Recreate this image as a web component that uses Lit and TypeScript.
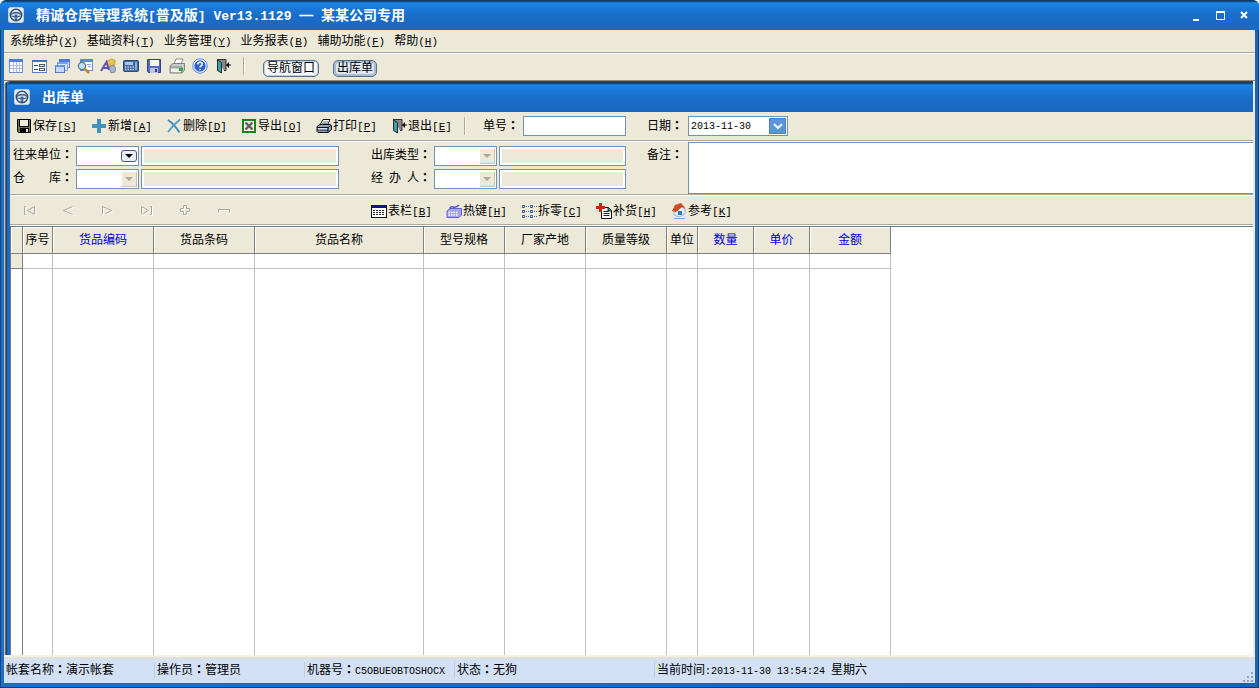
import { LitElement, html, css, svg, TemplateResult } from "lit";
import { customElement, state } from "lit/decorators.js";

/** Splits a caption into CJK text, half-width Latin runs and full-width colons. "_X" marks an access key. */
function t(text: string): unknown[] {
  const runs = text.match(/[\x20-\x7e]+|：|[^\x20-\x7e：]+/g) ?? [];
  return runs.map((run) => {
    if (run === "：") return html`<span class="colon">：</span>`;
    if (!/^[\x20-\x7e]/.test(run)) return run;
    const key = run.match(/^(.)_(.)(.)$/);
    return key
      ? html`<span class="latin access">${key[1]}<u>${key[2]}</u>${key[3]}</span>`
      : html`<span class="latin">${run}</span>`;
  });
}

const draw = (body: TemplateResult | unknown, w = 16, h = 16) =>
  html`<svg width=${w} height=${h} viewBox="0 0 ${w} ${h}" aria-hidden="true">${body}</svg>`;

const icons: Record<string, unknown> = {
  wheel: draw(svg`<rect x=".5" y=".5" width="15" height="15" rx="2" fill="#e8eef6" stroke="#b9cde4"/>
    <circle cx="8" cy="8" r="5.700" fill="none" stroke="#2c5078" stroke-width="1.500"/>
    <path d="M2.800 7.200Q8 4.200 13.200 7.200" fill="none" stroke="#3c6391" stroke-width="1.700"/>
    <path d="M3 9l4 .6L7.500 13M13 9l-4 .6L8.500 13" fill="none" stroke="#3c6391" stroke-width="1.200"/>
    <rect x="6.500" y="7.500" width="3" height="3" rx="1" fill="#3c6391"/>`),
  grid: draw(svg`<rect x="1.500" y="1.500" width="13" height="13" fill="#fff" stroke="#6a8cd6"/>
    <rect x="1" y="1" width="14" height="3" fill="#4f7be0"/>
    <path d="M2 7.500h12M2 10.500h12M5.500 4v10M8.500 4v10M11.500 4v10" stroke="#a9bfe8"/>`),
  form: draw(svg`<rect x="1.500" y="2.500" width="14" height="12" fill="#fff" stroke="#5d82c4"/>
    <rect x="1" y="2" width="15" height="2" fill="#3f6fd0"/>
    <path d="M3 7.500h4M3 11.500h4" stroke="#355"/><rect x="8.500" y="6.500" width="5" height="2" fill="#fff" stroke="#456"/>
    <rect x="8.500" y="10.500" width="5" height="2" fill="#fff" stroke="#456"/>`),
  windows: draw(svg`<rect x="5.500" y="1.500" width="10" height="8" fill="#cfdcf7" stroke="#6687cf"/><rect x="5" y="1" width="11" height="3" fill="#4c78da"/>
    <rect x="3.500" y="4.500" width="10" height="8" fill="#dbe5fa" stroke="#8aa4dc"/><rect x="3" y="4" width="11" height="2" fill="#7d9fe6"/>
    <rect x="1.500" y="7.500" width="9" height="7" fill="#c9d8f6" stroke="#5578c4"/><rect x="1" y="7" width="10" height="2" fill="#6c92e4"/>`),
  search: draw(svg`<rect x="3.500" y="1.500" width="12" height="11" fill="#fff" stroke="#6a8cd6"/><rect x="3" y="1" width="13" height="3" fill="#5b86e4"/>
    <path d="M10 6.500h4M11 8.500h3" stroke="#8ba7de"/><circle cx="5" cy="8" r="3.600" fill="#bfe6ee" stroke="#52748c" stroke-width="1.300"/>
    <path d="M8 11l4 4" stroke="#c58a28" stroke-width="2.500"/>`),
  design: draw(svg`<path d="M7 3l4-2 4 1v5l-4 2-4-2Z" fill="#e8c24a" stroke="#a8842a" stroke-width=".6"/><path d="M9 9l4-2 3 3-1 4-4 1Z" fill="#a8b5cf" stroke="#66748f" stroke-width=".7"/>
    <path d="M1 13L6.500 4 9 12M3 10h5" fill="none" stroke="#6753b8" stroke-width="2"/>`),
  calc: draw(svg`<rect x=".5" y="2.500" width="15" height="11" rx="1" fill="#42679b" stroke="#294c80"/><rect x="2" y="4" width="8" height="3" fill="#a9c6e6"/>
    <path d="M2 9h9M2 11.500h9" stroke="#b9cce4" stroke-width="1.500" stroke-dasharray="1.500 1"/><rect x="12" y="4" width="2" height="8" fill="#8daad0"/>`),
  disk: draw(svg`<path d="M1.500 1.500h13v13h-12l-1-1Z" fill="#5a66c4" stroke="#333d98"/><rect x="4" y="2" width="9" height="6" fill="#f4f6ff"/>
    <rect x="4" y="10" width="8" height="5" fill="#bcc4e6"/><rect x="9" y="11" width="2" height="3" fill="#303a86"/>`),
  printer: draw(svg`<path d="M5 6l2-5h7l-2 5Z" fill="#fff" stroke="#777" stroke-width=".8"/><path d="M1 8l3-2.500h11.500V12L13 15H1Z" fill="#c9ccca" stroke="#6a6d6b" stroke-width=".8"/>
    <path d="M1 9h12v6" fill="none" stroke="#80837f"/><path d="M2 11h10v3H2z" fill="#f2f2f2"/><rect x="10" y="10" width="4" height="3" fill="#3aa648"/>`),
  help: draw(svg`<circle cx="8" cy="8" r="7.200" fill="#fff" stroke="#5883d8"/><circle cx="8" cy="8" r="5.700" fill="#2e62cf"/>
    <path d="M5.800 6.400Q5.800 4.300 8 4.300T10.200 6.200Q10.200 7.400 8.900 8 8 8.400 8 9.600M8 10.900v1.300" stroke="#fff" stroke-width="1.500" fill="none"/>`),
  exit: draw(svg`<path d="M2 1.500h9v11H9" fill="#8a8a8a" stroke="#333"/><path d="M2.500 2L6.500 4.500V15L2.500 12.500Z" fill="#4a9aa6" stroke="#12343a"/>
    <path d="M11 7h5M13.500 4.500v5" stroke="#111" stroke-width="1"/><path d="M11 7l2.500-2.500v5Z" fill="#111"/>`),
  save: draw(svg`<path d="M1.500 1.500h13v13h-12l-1-1Z" fill="#77752c" stroke="#000"/><rect x="4" y="2" width="8" height="6" fill="#efecd9"/><path d="M3.500 2v6.500h9V2" fill="none" stroke="#000"/>
    <rect x="4" y="10" width="9" height="5" fill="#000"/><rect x="10" y="11" width="2" height="3" fill="#efecd9"/>`),
  add: draw(svg`<path d="M6 1h4v5h5v4h-5v5H6v-5H1V6h5Z" fill="#3d93bd"/>`),
  remove: draw(svg`<path d="M2 2Q8 6 13.500 14.500" stroke="#3a8dc0" stroke-width="2" fill="none"/><path d="M14 1.500Q7 7 2 14" stroke="#4c9bc9" stroke-width="1.700" fill="none"/>`),
  excel: draw(svg`<rect x="2" y="2" width="12" height="12" fill="#fff" stroke="#168417" stroke-width="2"/><path d="M4 4h8v8H4z" fill="#dcdcdc"/>
    <path d="M4.500 4.500l7 7M11.500 4.500l-7 7" stroke="#555b57" stroke-width="2"/>`),
  print: draw(svg`<path d="M4 7l3-5.500h7L11.500 7Z" fill="#fff" stroke="#111"/><path d="M7 4h5M6 5.700h5" stroke="#333" stroke-width=".7"/><path d="M1 8.500L4 6.500h10.500l1 1v4L12 14.500H2l-1-1Z" fill="#8ea2c2" stroke="#111"/>
    <path d="M1 9.500h11l3-2M12 9.500v5M1 12h11" stroke="#111" fill="none"/><rect x="2" y="10" width="9" height="1.500" fill="#dbe2ee"/>`),
  columns: draw(svg`<rect x=".5" y="2.500" width="15" height="12" fill="#fff" stroke="#111"/><rect x="1" y="2" width="14" height="3" fill="#11118e"/>
    <path d="M2 7.500h12M2 9.500h12M2 11.500h12" stroke="#222" stroke-dasharray="2 1"/>`),
  hotkey: draw(svg`<path d="M4 6Q4 3 7 4T13 2" fill="none" stroke="#5a54d2" stroke-width="1.500"/><path d="M1 8l3-2.500h11.500V12L13 14.500H1Z" fill="#a6a4ec" stroke="#6360d0"/>
    <path d="M2.500 9.500h10M2.500 12h10" stroke="#fff" stroke-width="1.300" stroke-dasharray="1.500 1"/>`),
  split: draw(svg`<g fill="none" stroke="#4a69a4"><rect x="1.500" y="2.500" width="2" height="2"/><rect x="1.500" y="7.500" width="2" height="2"/><rect x="1.500" y="12.500" width="2" height="2"/>
    <rect x="9.500" y="2.500" width="2" height="2"/><rect x="9.500" y="7.500" width="2" height="2"/><rect x="9.500" y="12.500" width="2" height="2"/>
    <path d="M5 3.500h3M5 8.500h3M5 13.500h3M13 3.500h3M13 8.500h3M13 13.500h3" stroke-dasharray="1 1"/></g>`),
  refill: draw(svg`<path d="M5.500 4.500h7l3 3v8h-10Z" fill="#fff" stroke="#111"/><path d="M12 4.500V8h3.500" fill="#19a0a8" stroke="#111"/><path d="M7.500 8.500h5M7.500 10.500h6M7.500 12.500h6" stroke="#222"/>
    <path d="M3 0h3v3h3v3H6v3H3V6H0V3h3Z" fill="#bd2d12"/>`),
  home: draw(svg`<path d="M3 7v5l5 2 6-3V6L9 3Z" fill="#e7effb" stroke="#7d9bc6" stroke-width=".7"/><path d="M1 8L4 2l6-2 5 6-4-2-6 5Z" fill="#cc4a24"/>
    <rect x="7" y="8" width="4" height="4" fill="#2d7ac6"/><path d="M3 15.500h11" stroke="#79a7dd"/>`),
};

const navGlyphs: [string, string][] = [
  ["首条", "M4 2.500H2.500v8H4M12.500 2.500L5.500 6.500l7 4Z"],
  ["上一条", "M11.500 2.500L2.500 6.500l9 4"],
  ["下一条", "M2.500 10.500v-8l9 4-6 3"],
  ["末条", "M2.500 10.500v-8l7 4-6 3.500M11 2.500h1.500v8H11"],
  ["插入", "M5.500 1.500h3v3h3v3h-3v3h-3v-3h-3v-3h3Z"],
  ["移除", "M1.500 8.500v-3h11v3"],
];

const gridColumns = [
  { title: "序号", width: 30 },
  { title: "货品编码", width: 101, key: true },
  { title: "货品条码", width: 101 },
  { title: "货品名称", width: 169 },
  { title: "型号规格", width: 81 },
  { title: "厂家产地", width: 81 },
  { title: "质量等级", width: 81 },
  { title: "单位", width: 31 },
  { title: "数量", width: 56, key: true },
  { title: "单价", width: 56, key: true },
  { title: "金额", width: 81, key: true },
];

@customElement("app-root")
export class AppRoot extends LitElement {
  static styles = css`
    :host {
      display: flex;
      flex-direction: column;
      height: 100vh;
      box-sizing: border-box;
      overflow: hidden;
      padding: 0 4px 5px;
      background: linear-gradient(90deg, #12467e 1px, #1f6fc4 1px, #1b62b0 calc(100% - 1px), #123e70 calc(100% - 1px));
      border-radius: 6px 6px 0 0;
      font: 12px/16px "Liberation Sans", "Noto Sans CJK SC", sans-serif;
      color: #000;
      box-shadow: inset 0 -1px #123e70;
    }
    * { box-sizing: border-box; }
    svg { display: block; flex: none; }
    button, input, select, textarea { font: inherit; color: inherit; margin: 0; border-radius: 0; }
    button { border: 0; padding: 0; background: none; white-space: nowrap; }
    .latin { font-family: "Liberation Mono", monospace; font-size: 10px; line-height: 1; white-space: pre; }
    .access { font-size: 11px; }
    .colon { font-family: "Noto Sans CJK TC", sans-serif; font-weight: 700; line-height: 1; }
    u { text-underline-offset: 1px; }

    .title {
      display: flex;
      align-items: center;
      height: 30px;
      flex: none;
      color: #fff;
      font-size: 14px;
      font-weight: 700;
      white-space: pre;
      background: linear-gradient(#0c3a66 1px, #1a86e8 3px, #1a78d8 8px, #1a6cc8 16px, #1b68c2);
    }
    .title .latin { font-size: 13px; }
    .title svg { margin: 0 12px 0 4px; }
    .main-title { margin: 0 -4px; padding: 0 7px 0 4px; border-radius: 6px 6px 0 0; }
    .caption { flex: 1; font: inherit; margin: 0; }
    .controls { display: flex; gap: 8px; }
    .controls button { width: 16px; height: 16px; }
    .controls svg { margin: 0; }

    .menu { display: flex; flex: none; gap: 9px; height: 23px; padding: 3px 6px; background: #ece9d8; border-bottom: 1px solid #aca899; }
    .quick { display: flex; flex: none; align-items: center; gap: 7px; height: 27px; padding: 0 4px 3px; background: #ece9d8; border-top: 1px solid #fff; }
    .rule { width: 2px; height: 18px; border-left: 1px solid #aca899; border-right: 1px solid #fff; }
    .quick .rule { margin: 0 11px 0 5px; }
    .tab { height: 17px; margin: 5px 7px 0 0; padding: 0 3px; border: 1px solid #5a7088; border-radius: 5px; line-height: 15px; background: #f6f8fb; box-shadow: inset 0 0 0 1px #c3d0e0; }
    .tab.open { background: #dfe7f1; box-shadow: inset 0 0 0 2px #a9bbd0; }

    .mdi { flex: 1; min-height: 0; display: flex; padding: 0 2px 0 0; background: #ece9d8; border-top: 1px solid #8a8778; border-bottom: 2px solid #f3f0e4; }
    .child { flex: 1; min-width: 0; display: flex; flex-direction: column; padding-left: 6px; border-top: 1px solid #444; border-top-left-radius: 6px;
      background: linear-gradient(90deg, #c4c0b0 1px, #6d6d68 1px, #6d6d68 2px, #123e70 2px, #123e70 3px, #2268bd 3px); }
    .child .title { margin-left: -3px; border-radius: 5px 0 0 0; }
    .child .title svg { margin-left: 7px; }
    .bar { display: flex; flex: none; align-items: center; height: 29px; background: #ece9d8; border-bottom: 1px solid #aca899; padding-left: 6px; }
    .tool { display: flex; align-items: center; gap: 1px; width: 75px; height: 20px; }
    .tool span { flex: none; }
    .bar .rule { margin: 0 17px 0 -2px; }
    .box { height: 20px; border: 1px solid #7294b4; background: #fff; padding: 0 3px; outline: none; min-width: 0; }
    .number { width: 103px; }
    .number-label { width: 40px; }
    .date-label { width: 41px; margin-left: 21px; }
    .date { display: flex; width: 100px; padding: 1px; align-items: center; }
    .date input { flex: 1; min-width: 0; border: 0; padding: 0 1px; outline: none; font: 10px "Liberation Mono", monospace; background: none; }
    .drop { display: grid; place-items: center; width: 17px; height: 16px; background: #5e92dc; border: 1px solid #4c80cc; }

    .details { display: grid; flex: none; grid-template-columns: 63px 63px 200px 95px 63px 129px 62px minmax(0, 1fr); grid-template-rows: 20px 20px;
      row-gap: 3px; align-items: center; align-content: start; background: #ece9d8; border-top: 1px solid #fff; border-bottom: 1px solid #aca899; padding: 4px 0 0 3px; height: 54px; }
    .details label { height: 18px; line-height: 16px; }
    .shown { box-shadow: inset 0 0 0 2px #fff; background: #ece9d8; margin-left: 2px; }
    .l2 { margin-left: 32px; }
    .l3 { margin-left: 21px; }
    .spread { display: flex; justify-content: space-between; width: 60px; }
    .pick { display: grid; height: 20px; }
    .pick select { grid-area: 1 / 1; appearance: none; width: 100%; height: 20px; opacity: 1; }
    .pick span { grid-area: 1 / 1; justify-self: end; align-self: center; margin-right: 2px; display: grid; place-items: center; width: 16px; height: 16px; pointer-events: none; }
    .pick .on { height: 12px; border: 1px solid #47597a; border-radius: 3px; background: #e9eef6; }
    .pick .off { background: #ece9d8; border: 1px solid; border-color: #fff #c9c5b2 #c9c5b2 #fff; }
    .memo { grid-row: 1 / 3; grid-column: 8; align-self: start; margin-top: -4px; height: 52px; border: 1px solid #7294b4; border-right: 0; resize: none; outline: none; background: #fff; display: block; width: 100%; }
    .bar.nav { height: 30px; border-top: 1px solid #fff; padding: 1px 0 0; }
    .steps { display: flex; gap: 25px; padding-left: 12px; width: 361px; }
    .steps button { width: 14px; height: 14px; }

    .sheet { flex: 1; min-height: 0; overflow: hidden; background: #fff; border-top: 1px solid #fff; display: flex; flex-direction: column; }
    .frame { flex: 1; min-height: 0; border-top: 1px solid #5d8096; border-left: 1px solid #5d8096; }
    table { border-collapse: separate; border-spacing: 0; table-layout: fixed; width: 880px; height: 100%; }
    th { height: 27px; padding: 0; font-weight: 400; background: #ece9d8; border-right: 1px solid #808080; border-bottom: 1px solid #808080; box-shadow: inset 1px 1px #fff; white-space: nowrap; }
    td { padding: 0; border-right: 1px solid #c0c0c0; }
    th.key { color: #0000d8; }
    .row td { height: 15px; border-bottom: 1px solid #c0c0c0; }
    td.mark { border-right-color: #808080; }
    .row td.mark { background: #ece9d8; border-bottom-color: #808080; }

    .status { display: grid; flex: none; grid-template-columns: 150px 150px 150px 200px 1fr auto; height: 26px; align-items: center; white-space: nowrap;
      background: linear-gradient(#dfdfdc 2px, #d3e1f6 3px, #d2e0f5); }
    .status div { height: 16px; padding-left: 2px; border-left: 1px solid #bccce2; line-height: 16px; white-space: pre; }
    .status div:first-child { padding-left: 1px; border-left-color: transparent; }
    .status svg { align-self: end; margin-right: 1px; }
  `;

  @state() private tab = "出库单";

  private tool(icon: string, label: string) {
    return html`<button class="tool">${icons[icon]}<span>${t(label)}</span></button>`;
  }

  private pick(id: string, enabled = false) {
    return html`<div class="pick">
      <select id=${id} class="box" ?disabled=${!enabled}></select>
      <span class=${enabled ? "on" : "off"}>
        ${draw(svg`<path d="M0 0h8L4 4Z" fill=${enabled ? "#000" : "#aca899"}/>`, 8, 4)}
      </span>
    </div>`;
  }

  render() {
    return html`
      <header class="title main-title">
        ${icons.wheel}
        <h1 class="caption">${t("精诚仓库管理系统[普及版] Ver13.1129 — 某某公司专用")}</h1>
        <div class="controls">
          <button aria-label="最小化">${draw(svg`<path d="M5 13h6" stroke="#fff" stroke-width="2"/>`)}</button>
          <button aria-label="最大化">${draw(svg`<path d="M4.500 4.500h8v8h-8Z" fill="none" stroke="#fff"/><path d="M4 4h9v2H4z" fill="#fff"/>`)}</button>
          <button aria-label="关闭">${draw(svg`<path d="M5 5l6 6M11 5l-6 6" stroke="#fff" stroke-width="2"/>`)}</button>
        </div>
      </header>
      <nav class="menu">
        ${["系统维护(_X)", "基础资料(_T)", "业务管理(_Y)", "业务报表(_B)", "辅助功能(_F)", "帮助(_H)"].map(
          (m) => html`<button>${t(m)}</button>`
        )}
      </nav>
      <div class="quick">
        ${["grid", "form", "windows", "search", "design", "calc", "disk", "printer", "help", "exit"].map(
          (i) => html`<button aria-label=${i}>${icons[i]}</button>`
        )}
        <span class="rule"></span>
        ${["导航窗口", "出库单"].map(
          (n) => html`<button class="tab ${this.tab === n ? "open" : ""}" @click=${() => (this.tab = n)}>${n}</button>`
        )}
      </div>
      <main class="mdi">
        <section class="child">
          <div class="title">${icons.wheel}<h2 class="caption">出库单</h2></div>
          <div class="bar">
            ${this.tool("save", "保存[_S]")}${this.tool("add", "新增[_A]")}${this.tool("remove", "删除[_D]")}
            ${this.tool("excel", "导出[_O]")}${this.tool("print", "打印[_P]")}${this.tool("exit", "退出[_E]")}
            <span class="rule"></span>
            <label class="number-label" for="number">${t("单号：")}</label>
            <input id="number" class="box number" />
            <label class="date-label" for="date">${t("日期：")}</label>
            <div class="box date">
              <input id="date" value="2013-11-30" />
              <button class="drop" aria-label="选择日期">
                ${draw(svg`<path d="M1 1l4 4 4-4" fill="none" stroke="#e8fbff" stroke-width="2"/>`, 10, 7)}
              </button>
            </div>
          </div>
          <div class="details">
            <label for="partner">${t("往来单位：")}</label>${this.pick("partner", true)}
            <input class="box shown" readonly aria-label="往来单位名称" />
            <label class="l2" for="kind">${t("出库类型：")}</label>${this.pick("kind")}
            <input class="box shown" readonly aria-label="出库类型名称" />
            <label class="l3" for="memo">${t("备注：")}</label>
            <textarea id="memo" class="memo"></textarea>
            <label class="spread" for="store"><span>仓</span><span>${t("库：")}</span></label>${this.pick("store")}
            <input class="box shown" readonly aria-label="仓库名称" />
            <label class="spread l2" for="clerk"><span>经</span><span>办</span><span>${t("人：")}</span></label>${this.pick("clerk")}
            <input class="box shown" readonly aria-label="经办人姓名" />
          </div>
          <div class="bar nav">
            <div class="steps">
              ${navGlyphs.map(
                ([name, d]) => html`<button disabled aria-label=${name}>
                  ${draw(
                    svg`<path d=${d} transform="translate(1 1)" fill="none" stroke="#fff"/><path d=${d} fill="none" stroke="#aca899"/>`,
                    14,
                    14
                  )}
                </button>`
              )}
            </div>
            ${this.tool("columns", "表栏[_B]")}${this.tool("hotkey", "热键[_H]")}${this.tool("split", "拆零[_C]")}
            ${this.tool("refill", "补货[_H]")}${this.tool("home", "参考[_K]")}
          </div>
          <div class="sheet">
            <div class="frame">
              <table>
                <colgroup>
                  <col style="width:12px" />
                  ${gridColumns.map((c) => html`<col style="width:${c.width}px" />`)}
                </colgroup>
                <thead>
                  <tr>
                    <th></th>
                    ${gridColumns.map((c) => html`<th class=${c.key ? "key" : ""}>${c.title}</th>`)}
                  </tr>
                </thead>
                <tbody>
                  <tr class="row"><td class="mark"></td>${gridColumns.map(() => html`<td></td>`)}</tr>
                  <tr><td class="mark"></td>${gridColumns.map(() => html`<td></td>`)}</tr>
                </tbody>
              </table>
            </div>
          </div>
        </section>
      </main>
      <footer class="status">
        <div>${t("帐套名称：演示帐套")}</div>
        <div>${t("操作员：管理员")}</div>
        <div>${t("机器号：C5OBUEOBTOSHOCX")}</div>
        <div>${t("状态：无狗")}</div>
        <div>${t("当前时间:2013-11-30 13:54:24 星期六")}</div>
        ${draw(
          svg`<path d="M9 1h2v2H9zM5 5h2v2H5zM9 5h2v2H9zM1 9h2v2H1zM5 9h2v2H5zM9 9h2v2H9z" fill="#8fa3c4"/>`,
          12,
          12
        )}
      </footer>
    `;
  }
}
